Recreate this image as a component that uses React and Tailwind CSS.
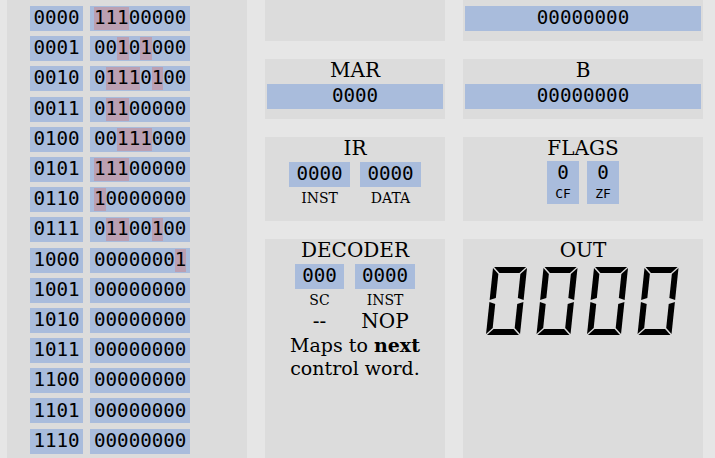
import React from "react";

const serif = { fontFamily: '"DejaVu Serif", serif' };

// rom contents, bits that are 1 get highlighted
const rom = [
  ["0000", "11100000"],
  ["0001", "00101000"],
  ["0010", "01110100"],
  ["0011", "01100000"],
  ["0100", "00111000"],
  ["0101", "11100000"],
  ["0110", "10000000"],
  ["0111", "01100100"],
  ["1000", "00000001"],
  ["1001", "00000000"],
  ["1010", "00000000"],
  ["1011", "00000000"],
  ["1100", "00000000"],
  ["1101", "00000000"],
  ["1110", "00000000"],
];

const Box = ({ children, className = "" }) => (
  <div
    className={`h-[25px] bg-[#a9bcdc] flex items-center justify-center font-['DejaVu_Sans_Mono',monospace] text-[19.2px] text-black ${className}`}
  >
    {children}
  </div>
);

const Panel = ({ title, children, className = "" }) => (
  <div className={`bg-[#dcdcdc] flex flex-col items-center ${className}`} style={serif}>
    {title && <div className="text-[20px] leading-[23px] mb-[2px] text-black">{title}</div>}
    {children}
  </div>
);

// one seven segment "0", upright then skewed
const Digit = ({ x }) => (
  <g transform={`translate(${x + 7.1},0) skewX(-6)`}>
    <polygon points="1,0 33,0 27,6 7,6" />
    <polygon points="0,1 6,7 6,31 0,33" />
    <polygon points="34,1 34,33 28,31 28,7" />
    <polygon points="0,35 6,37 6,61 0,67" />
    <polygon points="34,35 34,67 28,61 28,37" />
    <polygon points="1,68 33,68 27,62 7,62" />
  </g>
);

export default function App() {
  return (
    <div className="w-[715px] h-[458px] overflow-hidden bg-[#e6e6e6] flex gap-[18px] pl-[7px]">
      {/* ROM */}
      <div className="w-[240px] shrink-0 bg-[#dcdcdc] pt-[6px] pl-[23px] flex flex-col gap-[5.2px]">
        {rom.map(([addr, data]) => (
          <div key={addr} className="flex gap-[7px]">
            <Box className="w-[53px]">{addr}</Box>
            <Box className="w-[100px] justify-start! px-[4px]">
              {data.split("").map((b, i) => (
                <span
                  key={i}
                  className={`w-[11.56px] h-[23px] flex items-center justify-center ${b === "1" ? "bg-[#bba0b2]" : ""}`}
                >
                  {b}
                </span>
              ))}
            </Box>
          </div>
        ))}
      </div>

      {/* registers */}
      <div className="grid grid-cols-[180px_240px] grid-rows-[41px_60px_84px_1fr] gap-[18px] h-[476px]">
        <Panel />
        <Panel className="px-[2px] pt-[6px]">
          <Box className="w-full">00000000</Box>
        </Panel>

        <Panel title="MAR" className="px-[2px]">
          <Box className="w-full">0000</Box>
        </Panel>
        <Panel title="B" className="px-[2px]">
          <Box className="w-full">00000000</Box>
        </Panel>

        <Panel title="IR">
          <div className="flex gap-[10px]">
            <div className="flex flex-col items-center">
              <Box className="w-[61px]">0000</Box>
              <div className="text-[14px] leading-[18px] mt-[2px]">INST</div>
            </div>
            <div className="flex flex-col items-center">
              <Box className="w-[61px]">0000</Box>
              <div className="text-[14px] leading-[18px] mt-[2px]">DATA</div>
            </div>
          </div>
        </Panel>
        <Panel title="FLAGS">
          <div className="flex gap-[8px] -mt-[1px]">
            {["CF", "ZF"].map((f) => (
              <div
                key={f}
                className="w-[32px] h-[43px] bg-[#a9bcdc] flex flex-col items-center font-['DejaVu_Sans_Mono',monospace] text-black"
              >
                <div className="text-[19.2px] leading-[22px] pt-[1px]">0</div>
                <div className="text-[13px] leading-[20px]">{f}</div>
              </div>
            ))}
          </div>
        </Panel>

        <Panel title="DECODER">
          <div className="flex gap-[11px]">
            <div className="flex flex-col items-center">
              <Box className="w-[49px]">000</Box>
              <div className="text-[14px] leading-[18px] mt-[2px]">SC</div>
              <div className="text-[20px] leading-[25px]">--</div>
            </div>
            <div className="flex flex-col items-center">
              <Box className="w-[60px]">0000</Box>
              <div className="text-[14px] leading-[18px] mt-[2px]">INST</div>
              <div className="text-[20px] leading-[25px]">NOP</div>
            </div>
          </div>
          <div className="text-[19px] leading-[23px] text-center">
            Maps to <b>next</b>
            <br />
            control word.
          </div>
        </Panel>
        <Panel title="OUT">
          <svg width="195" height="68" viewBox="0 0 195 68" className="mt-[3px]">
            {[0, 50.5, 101, 151.5].map((x) => (
              <Digit key={x} x={x} />
            ))}
          </svg>
        </Panel>
      </div>
    </div>
  );
}
